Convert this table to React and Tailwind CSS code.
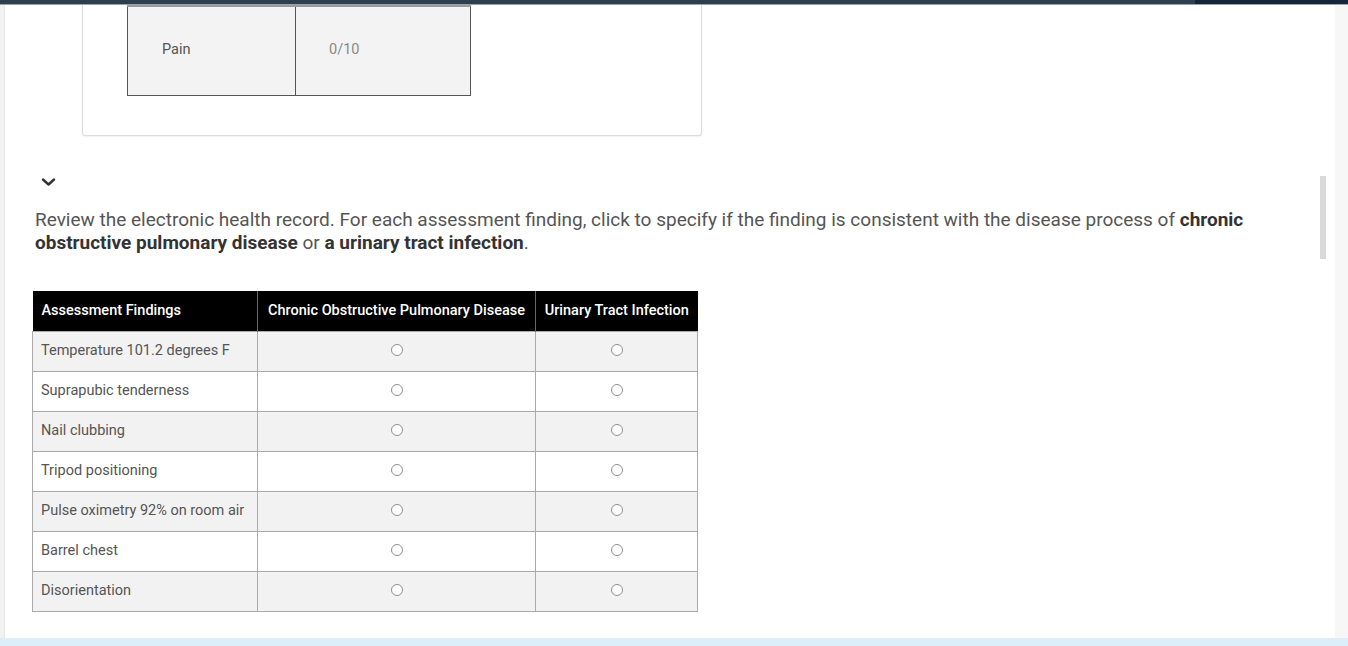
import React from "react";

const findings = [
  "Temperature 101.2 degrees F",
  "Suprapubic tenderness",
  "Nail clubbing",
  "Tripod positioning",
  "Pulse oximetry 92% on room air",
  "Barrel chest",
  "Disorientation",
];

function Radio() {
  return (
    <span className="inline-block w-[12px] h-[12px] rounded-full border border-[#8f8f8f] bg-white" />
  );
}

function App() {
  return (
    <div
      className="w-full h-[646px] flex flex-col overflow-hidden bg-white"
      style={{ fontFamily: "Roboto, 'Liberation Sans', sans-serif" }}
    >
      {/* top bar */}
      <div className="h-[4px] flex shrink-0">
        <div className="flex-1 bg-[#2d3e50]" />
        <div className="w-[153px] bg-[#14243b]" />
      </div>
      <div className="h-px bg-[#9aa3ad] shrink-0" />

      <div className="flex flex-1 min-h-0">
        <div className="w-[5px] bg-[#f2f2f2] border-r border-[#e6e6e6]" />

        <div className="relative flex-1 bg-white">
          {/* vitals card, scrolled above */}
          <div className="ml-[77px] w-[620px] h-[131px] border border-t-0 border-[#dcdcdc] rounded-b-[3px] shadow-[0_1px_2px_rgba(0,0,0,0.06)]">
            <div className="ml-[44px] w-[344px] border-t-2 border-[#9a9a9a]">
              <div className="flex h-[89px] border-b border-[#555] bg-[#f3f3f3] text-[14.5px]">
                <div className="w-[169px] border-l border-r border-[#555] flex items-center pl-[34px] pb-[2px] text-[#555]">
                  Pain
                </div>
                <div className="flex-1 border-r border-[#555] flex items-center pl-[33px] pb-[2px] text-[#888]">
                  0/10
                </div>
              </div>
            </div>
          </div>

          {/* chevron */}
          <div className="ml-[36px] mt-[39px] h-[14px] flex items-center">
            <svg width="15" height="10" viewBox="0 0 15 10" fill="none">
              <path
                d="M2 2.5 L7.5 7.5 L13 2.5"
                stroke="#333"
                strokeWidth="2.4"
                strokeLinecap="round"
                strokeLinejoin="round"
              />
            </svg>
          </div>

          {/* prompt */}
          <div className="ml-[30px] w-[1240px] mt-[19px] text-[19px] leading-[23px] text-[#555]">
            <p>
              Review the electronic health record. For each assessment finding,
              click to specify if the finding is consistent with the disease
              process of <b className="font-bold text-[#333]">chronic</b>
            </p>
            <p>
              <b className="font-bold text-[#333]">
                obstructive pulmonary disease
              </b>{" "}
              or{" "}
              <b className="font-bold text-[#333]">a urinary tract infection</b>.
            </p>
          </div>

          {/* matrix table */}
          <table className="ml-[27px] mt-[37px] border-collapse text-[14.5px]">
            <thead>
              <tr className="bg-black text-white h-[40px]">
                <th className="w-[225px] text-left font-medium pl-[9px] border-r border-[#666]">
                  Assessment Findings
                </th>
                <th className="w-[278px] text-center font-medium border-r border-[#666]">
                  Chronic Obstructive Pulmonary Disease
                </th>
                <th className="w-[162px] text-center font-medium">
                  Urinary Tract Infection
                </th>
              </tr>
            </thead>
            <tbody>
              {findings.map((f, i) => (
                <tr
                  key={f}
                  className={
                    "h-[40px] " + (i % 2 === 0 ? "bg-[#f2f2f2]" : "bg-white")
                  }
                >
                  <td className="border border-[#aaa] pl-[8px] text-[#555]">
                    {f}
                  </td>
                  <td className="border border-[#aaa] text-center">
                    <div className="flex justify-center pb-[3px]">
                      <Radio />
                    </div>
                  </td>
                  <td className="border border-[#aaa] text-center">
                    <div className="flex justify-center pb-[3px]">
                      <Radio />
                    </div>
                  </td>
                </tr>
              ))}
            </tbody>
          </table>

          {/* scrollbar thumb */}
          <div className="absolute left-[1315px] top-[171px] w-[6px] h-[83px] bg-[#d9d9d9]" />
        </div>

        <div className="w-[13px] bg-[#f7f7f7]" />
      </div>

      <div className="h-[8px] shrink-0 bg-[#dceefa] border-t border-[#e3edf5]" />
    </div>
  );
}

export default App;
